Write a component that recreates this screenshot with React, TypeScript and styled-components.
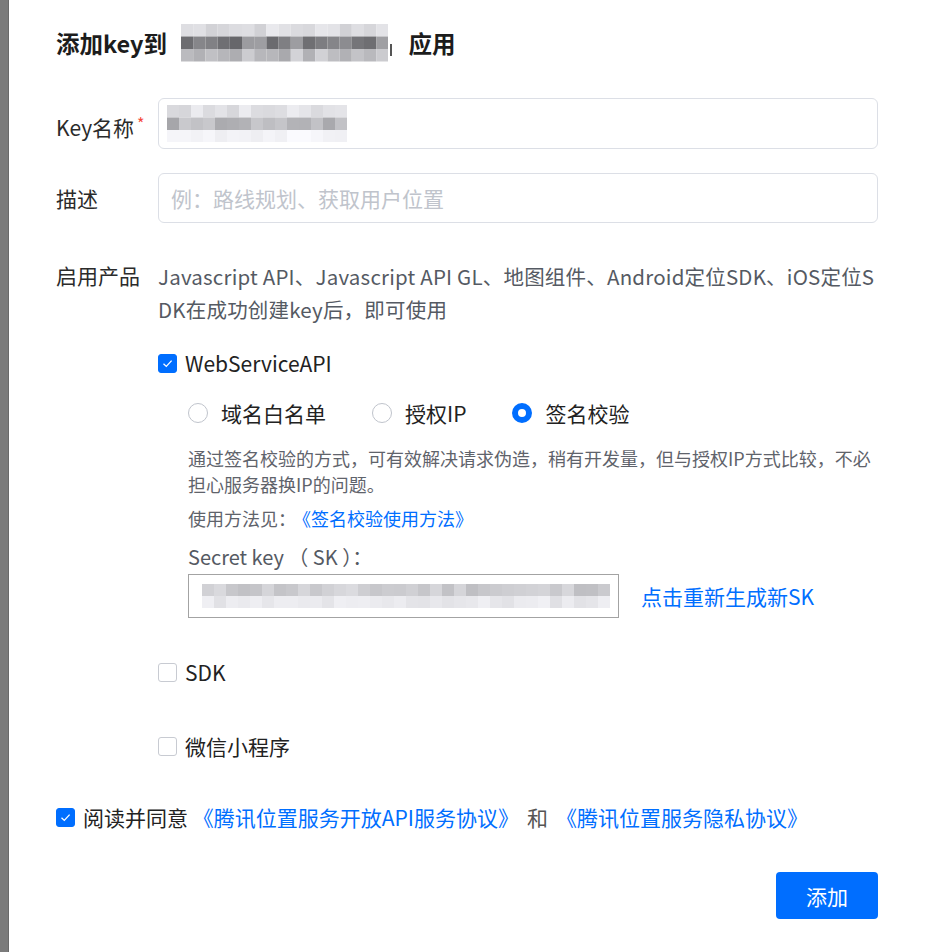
import React from "react";
import styled, { createGlobalStyle } from "styled-components";

const GlobalStyle = createGlobalStyle`
  html, body { margin: 0; padding: 0; background: #fff; }
  body {
    font-family: "Noto Sans CJK SC", "Noto Sans", "Liberation Sans", sans-serif;
    color: #333;
  }
  * { box-sizing: border-box; }
`;

const BLUE = "#006eff";

const Page = styled.div`
  display: flex;
  min-height: 952px;
  width: 925px;
  overflow: hidden;
`;

const Backdrop = styled.div`
  width: 9px;
  flex: none;
  background: #7b7b7b;
  border-right: 1px solid #6a6a6a;
`;

const Dialog = styled.div`
  flex: 1;
  background: #fff;
  padding: 24px 47px 0 47px;
`;

const Title = styled.h2`
  margin: 0;
  display: flex;
  align-items: center;
  height: 38px;
  font-size: 23.5px;
  font-weight: 700;
  color: #1c1c1c;
`;

const TitleSeg = styled.span<{ $ml?: number }>`
  margin-left: ${(p) => p.$ml ?? 0}px;
  display: inline-flex;
  align-items: center;
`;

const TitleBar = styled.span`
  width: 2px;
  height: 12px;
  background: #555;
  margin-top: 14px;
  margin-left: 2px;
`;

const FormRow = styled.div<{ $mt: number; $align?: string }>`
  display: grid;
  grid-template-columns: 102px 1fr;
  align-items: ${(p) => p.$align ?? "center"};
  margin-top: ${(p) => p.$mt}px;
`;

const Label = styled.div<{ $lh?: number }>`
  font-size: 21px;
  color: #2b2b2b;
  line-height: ${(p) => p.$lh ?? 30}px;
  white-space: nowrap;
`;

const Required = styled.sup`
  color: #f5483b;
  font-size: 16px;
  margin-left: 3px;
  position: relative;
  top: 2px;
`;

const InputBox = styled.div<{ $h: number }>`
  height: ${(p) => p.$h}px;
  border: 1px solid #dcdfe6;
  border-radius: 6px;
  display: flex;
  align-items: center;
  padding: 0 8px;
  font-size: 21px;
`;

const Placeholder = styled.span`
  color: #c0c4cc;
  padding-left: 4px;
`;

const ProductText = styled.div`
  font-size: 20.5px;
  letter-spacing: 0.2px;
  line-height: 33px;
  color: #555a63;
  word-break: break-all;
`;

const CheckRow = styled.label<{ $mt: number }>`
  display: flex;
  align-items: center;
  gap: 8px;
  margin-top: ${(p) => p.$mt}px;
  font-size: 21px;
  line-height: 30px;
  color: #222;
`;

const Box = styled.span<{ $checked?: boolean }>`
  width: 19px;
  height: 19px;
  flex: none;
  border-radius: 3px;
  border: 1px solid ${(p) => (p.$checked ? BLUE : "#c8cbd2")};
  background: ${(p) => (p.$checked ? BLUE : "#fff")};
  display: inline-flex;
  align-items: center;
  justify-content: center;
`;

const SubBlock = styled.div`
  padding-left: 30px;
`;

const RadioGroup = styled.div`
  display: flex;
  align-items: center;
  gap: 46px;
  margin-top: 20px;
  height: 30px;
`;

const RadioItem = styled.label`
  display: flex;
  align-items: center;
  gap: 13px;
  font-size: 21px;
  color: #222;
`;

const RadioCircle = styled.span<{ $checked?: boolean }>`
  width: 20px;
  height: 20px;
  border-radius: 50%;
  flex: none;
  border: ${(p) => (p.$checked ? `6px solid ${BLUE}` : "1px solid #c0c4cc")};
  background: #fff;
`;

const Desc = styled.div<{ $mt: number }>`
  margin-top: ${(p) => p.$mt}px;
  font-size: 18px;
  line-height: 26px;
  color: #5f636b;
  word-break: break-all;
`;

const Link = styled.a`
  color: ${BLUE};
  text-decoration: none;
  cursor: pointer;
`;

const UsageLink = styled(Link)`
  margin-left: 6px;
`;

const SkLabel = styled.div`
  margin-top: 13px;
  font-size: 20px;
  line-height: 26px;
  color: #555a63;
  white-space: pre;
`;

const SkRow = styled.div`
  display: flex;
  align-items: center;
  gap: 22px;
  margin-top: 4px;
`;

const SkInput = styled.div`
  width: 431px;
  height: 44px;
  border: 1px solid #a3a3a3;
  display: flex;
  align-items: center;
  padding-left: 13px;
`;

const SkLink = styled(Link)`
  font-size: 21px;
`;

const Agreement = styled.div`
  display: flex;
  align-items: center;
  gap: 8px;
  margin-top: 41px;
  font-size: 21px;
  line-height: 30px;
  color: #222;
`;

const Gray = styled.span`
  color: #555;
  margin: 0 8px;
`;

const Footer = styled.div`
  display: flex;
  justify-content: flex-end;
  margin-top: 40px;
`;

const PrimaryButton = styled.button`
  width: 102px;
  height: 47px;
  border: none;
  border-radius: 4px;
  background: ${BLUE};
  color: #fff;
  font-family: inherit;
  font-size: 21px;
  cursor: pointer;
`;

function rng(seed: number) {
  let s = seed;
  return () => {
    s = (s * 9301 + 49297) % 233280;
    return s / 233280;
  };
}

const Mosaic: React.FC<{
  cols: number;
  cell: number;
  cellH?: number;
  rows: [number, number][];
  seed: number;
}> = ({ cols, cell, cellH, rows, seed }) => {
  const r = rng(seed);
  const ch = cellH ?? cell;
  const w = cols * cell;
  const h = rows.length * ch;
  return (
    <svg width={w} height={h} viewBox={`0 0 ${w} ${h}`}>
      {rows.map(([base, spread], ri) =>
        Array.from({ length: cols }).map((_, ci) => {
          const v = Math.round(base + (r() - 0.5) * spread);
          const c = Math.max(0, Math.min(250, v));
          return (
            <rect
              key={`${ri}-${ci}`}
              x={ci * cell}
              y={ri * ch}
              width={cell}
              height={ch}
              fill={`rgb(${c},${c},${c + 4})`}
            />
          );
        })
      )}
    </svg>
  );
};

const Check = () => (
  <svg width="13" height="13" viewBox="0 0 13 13">
    <path d="M2.5 6.8 L5.3 9.4 L10.6 3.6" fill="none" stroke="#fff" strokeWidth="1.3" />
  </svg>
);

export default function App() {
  return (
    <>
      <GlobalStyle />
      <Page>
        <Backdrop />
        <Dialog>
          <Title>
            <span>添加key到</span>
            <TitleSeg $ml={14}>
              <Mosaic cols={17} cell={12.2} cellH={12.5} rows={[[222, 30], [130, 60], [190, 50]]} seed={7} />
              <TitleBar />
            </TitleSeg>
            <TitleSeg $ml={16}>应用</TitleSeg>
          </Title>

          <FormRow $mt={36}>
            <Label>
              Key名称<Required>*</Required>
            </Label>
            <InputBox $h={51}>
              <Mosaic cols={15} cell={12} cellH={12.5} rows={[[222, 30], [185, 40], [245, 14]]} seed={3} />
            </InputBox>
          </FormRow>

          <FormRow $mt={24}>
            <Label>描述</Label>
            <InputBox $h={50}>
              <Placeholder>例：路线规划、获取用户位置</Placeholder>
            </InputBox>
          </FormRow>

          <FormRow $mt={37} $align="start">
            <Label $lh={30}>启用产品</Label>
            <div>
              <ProductText>
                Javascript API、Javascript API GL、地图组件、Android定位SDK、iOS定位SDK在成功创建key后，即可使用
              </ProductText>

              <CheckRow $mt={22}>
                <Box $checked>
                  <Check />
                </Box>
                WebServiceAPI
              </CheckRow>

              <SubBlock>
                <RadioGroup>
                  <RadioItem>
                    <RadioCircle />
                    域名白名单
                  </RadioItem>
                  <RadioItem>
                    <RadioCircle />
                    授权IP
                  </RadioItem>
                  <RadioItem>
                    <RadioCircle $checked />
                    签名校验
                  </RadioItem>
                </RadioGroup>

                <Desc $mt={17}>
                  通过签名校验的方式，可有效解决请求伪造，稍有开发量，但与授权IP方式比较，不必担心服务器换IP的问题。
                </Desc>
                <Desc $mt={8}>
                  使用方法见：<UsageLink>《签名校验使用方法》</UsageLink>
                </Desc>

                <SkLabel>{"Secret key （ SK ）："}</SkLabel>
                <SkRow>
                  <SkInput>
                    <Mosaic cols={34} cell={12} rows={[[205, 30], [232, 18]]} seed={11} />
                  </SkInput>
                  <SkLink>点击重新生成新SK</SkLink>
                </SkRow>
              </SubBlock>

              <CheckRow $mt={39}>
                <Box />
                SDK
              </CheckRow>

              <CheckRow $mt={44}>
                <Box />
                微信小程序
              </CheckRow>
            </div>
          </FormRow>

          <Agreement>
            <Box $checked>
              <Check />
            </Box>
            <span>
              阅读并同意 <Link>《腾讯位置服务开放API服务协议》</Link>
              <Gray>和</Gray>
              <Link>《腾讯位置服务隐私协议》</Link>
            </span>
          </Agreement>

          <Footer>
            <PrimaryButton>添加</PrimaryButton>
          </Footer>
        </Dialog>
      </Page>
    </>
  );
}
